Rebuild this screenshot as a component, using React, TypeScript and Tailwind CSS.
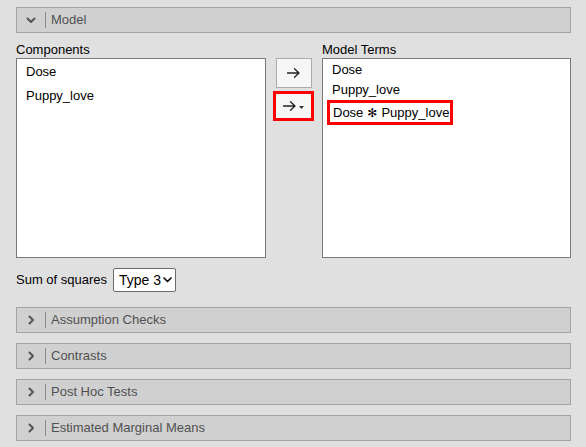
import React from "react";

const font = { fontFamily: '"Liberation Sans", Arial, sans-serif' };

function ChevronDown() {
  return (
    <svg width="10" height="7" viewBox="0 0 10 7" className="block">
      <path d="M1.5 1.5 L5 5 L8.5 1.5" fill="none" stroke="#555" strokeWidth="2" strokeLinecap="round" strokeLinejoin="round" />
    </svg>
  );
}

function ChevronRight() {
  return (
    <svg width="7" height="10" viewBox="0 0 7 10" className="block">
      <path d="M1.5 1.5 L5 5 L1.5 8.5" fill="none" stroke="#555" strokeWidth="2" strokeLinecap="round" strokeLinejoin="round" />
    </svg>
  );
}

function Arrow() {
  return (
    <svg width="13" height="10" viewBox="0 0 13 10" className="block">
      <path d="M0.5 5 H12 M7.5 0.8 L12 5 L7.5 9.2" fill="none" stroke="#222" strokeWidth="1.3" strokeLinecap="round" strokeLinejoin="round" />
    </svg>
  );
}

function SectionHeader({ title, open }: { title: string; open?: boolean }) {
  return (
    <div className="flex h-[26px] items-center border border-[#a3a3a3] bg-[#d0d0d0]">
      <div className="flex w-[28px] justify-center">{open ? <ChevronDown /> : <ChevronRight />}</div>
      <div className="h-[16px] w-px bg-[#8a8a8a]" />
      <span className="ml-[5px] text-[13px] text-[#505050]">{title}</span>
    </div>
  );
}

export default function App() {
  return (
    <div className="h-[447px] w-[586px] bg-[#e0e0e0] pl-4 pr-[15px] pt-[7px] text-[13px] text-black" style={font}>
      <SectionHeader title="Model" open />
      <div className="mt-[8px] flex">
        <div className="w-[250px]">
          <div className="h-[17px] leading-[17px]">Components</div>
          <div className="h-[200px] border border-[#7a7a7a] bg-white pl-[9px] pt-[1px]">
            <div className="h-[24px] leading-[24px]">Dose</div>
            <div className="h-[24px] leading-[24px]">Puppy_love</div>
          </div>
        </div>
        <div className="ml-[7px] flex w-[41px] flex-col items-center pt-[17px]">
          <div className="flex h-[30px] w-[36px] items-center justify-center border border-[#ababab] bg-[#f6f6f6]">
            <Arrow />
          </div>
          <div className="mt-[3px] flex h-[30px] w-[41px] items-center justify-center gap-[3px] border-[3px] border-[#ff0000] bg-[#f6f6f6]">
            <Arrow />
            <svg width="5" height="3" viewBox="0 0 5 3" className="block mt-[2px]">
              <path d="M0 0 H5 L2.5 3 Z" fill="#333" />
            </svg>
          </div>
        </div>
        <div className="ml-[8px] w-[249px]">
          <div className="h-[17px] leading-[17px]">Model Terms</div>
          <div className="h-[200px] border border-[#7a7a7a] bg-white pl-[4px] pt-[1px]">
            <div className="ml-[5px] h-[20px] leading-[20px]">Dose</div>
            <div className="ml-[5px] h-[20px] leading-[20px]">Puppy_love</div>
            <div className="inline-flex h-[25px] w-[126px] items-center border-[3px] border-[#ff0000] pl-[3px]">
              Dose <span className="mx-[4px] text-[12px]" style={{ fontFamily: '"DejaVu Sans", sans-serif' }}>✻</span> Puppy_love
            </div>
          </div>
        </div>
      </div>
      <div className="mt-[10px] flex items-center">
        <span>Sum of squares</span>
        <div className="ml-[6px] flex h-[24px] w-[63px] items-center justify-between whitespace-nowrap rounded-[2px] border border-[#6b6b6b] bg-white pl-[5px] pr-[3px] text-[14px]">
          <span>Type 3</span>
          <svg width="9" height="6" viewBox="0 0 9 6" className="block shrink-0">
            <path d="M1 1 L4.5 4.5 L8 1" fill="none" stroke="#111" strokeWidth="1.7" strokeLinecap="round" strokeLinejoin="round" />
          </svg>
        </div>
      </div>
      <div className="mt-[15px] flex flex-col gap-[10px]">
        <SectionHeader title="Assumption Checks" />
        <SectionHeader title="Contrasts" />
        <SectionHeader title="Post Hoc Tests" />
        <SectionHeader title="Estimated Marginal Means" />
      </div>
    </div>
  );
}
